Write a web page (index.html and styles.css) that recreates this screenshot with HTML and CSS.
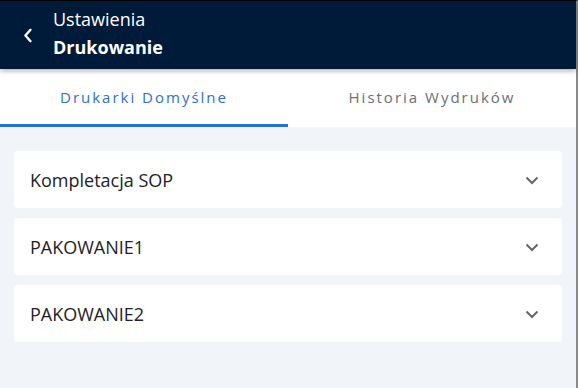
FILE: index.html
```html
<!DOCTYPE html>
<html lang="pl">
<head>
<meta charset="utf-8">
<link rel="stylesheet" href="styles.css">
</head>
<body>
<div class="frame">
  <header class="header">
    <button class="back" aria-label="Wstecz">
      <svg width="10" height="15" viewBox="0 0 10 15"><path d="M7.5 1.8 L2.4 7.5 L7.5 13.2" fill="none" stroke="#fff" stroke-width="2.4" stroke-linecap="round" stroke-linejoin="round"/></svg>
    </button>
    <div class="titles">
      <div class="sub">Ustawienia</div>
      <div class="main">Drukowanie</div>
    </div>
  </header>
  <nav class="tabs">
    <div class="tab active">Drukarki Domyślne</div>
    <div class="tab">Historia Wydruków</div>
  </nav>
  <main class="content">
    <div class="card"><span>Kompletacja SOP</span><svg class="chev" width="14" height="9" viewBox="0 0 14 9"><path d="M1.5 1.5 L7 7 L12.5 1.5" fill="none" stroke="#666" stroke-width="2"/></svg></div>
    <div class="card"><span>PAKOWANIE1</span><svg class="chev" width="14" height="9" viewBox="0 0 14 9"><path d="M1.5 1.5 L7 7 L12.5 1.5" fill="none" stroke="#666" stroke-width="2"/></svg></div>
    <div class="card"><span>PAKOWANIE2</span><svg class="chev" width="14" height="9" viewBox="0 0 14 9"><path d="M1.5 1.5 L7 7 L12.5 1.5" fill="none" stroke="#666" stroke-width="2"/></svg></div>
  </main>
</div>
</body>
</html>
```
FILE: styles.css
```css
* { box-sizing: border-box; }
html, body { margin: 0; padding: 0; height: 100%; }
body { font-family: "Open Sans", "Liberation Sans", sans-serif; background: #f1f5fa; overflow: hidden; }
.frame { height: 388px; width: 578px; border-top: 1px solid #000; border-right: 2px solid #8a8a8a; display: flex; flex-direction: column; background: #f1f5fa; }
.header { height: 68px; background: #001a3a; display: flex; align-items: center; padding-left: 23px; box-shadow: 0 2px 5px rgba(0,0,0,0.3); position: relative; z-index: 1; }
.back { background: none; border: 0; padding: 0; width: 10px; height: 15px; display: flex; align-items: center; justify-content: center; margin-right: 20px; margin-top: 0; }
.titles { color: #fff; display: flex; flex-direction: column; margin-top: -4px; }
.sub { font-size: 18px; line-height: 28px; }
.main { font-size: 18px; line-height: 28px; font-weight: 700; }
.tabs { height: 58px; background: #fff; display: flex; }
.tab { flex: 1; display: flex; align-items: center; justify-content: center; font-size: 15px; letter-spacing: 2px; color: #6b6f78; border-bottom: 3px solid transparent; }
.tab.active { color: #2f6fd4; border-bottom-color: #1f74d6; }
.content { padding: 24px 14px; display: flex; flex-direction: column; gap: 10px; }
.card { height: 57px; background: #fff; border-radius: 4px; display: flex; align-items: center; justify-content: space-between; padding: 0 23px 0 16px; font-size: 18px; color: #1e2227; }
.chev { display: block; margin-top: 2px; }
```
